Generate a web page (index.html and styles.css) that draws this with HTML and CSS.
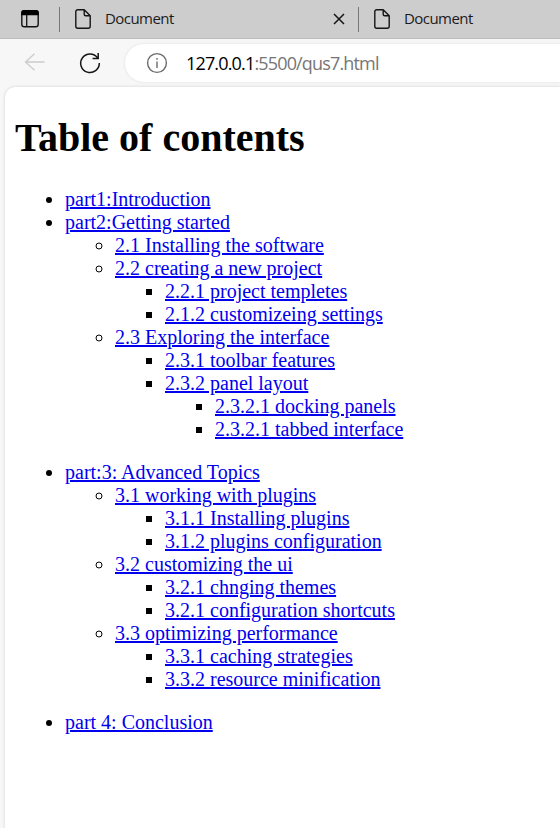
FILE: index.html
```html
<!DOCTYPE html>
<html lang="en">
<head>
<meta charset="utf-8">
<title>Document</title>
<link rel="stylesheet" href="styles.css">
</head>
<body>
<div class="tabs">
  <svg class="workspace" width="20" height="20" viewBox="0 0 20 20"><rect x="1.8" y="1.8" width="16.4" height="16" rx="2.6" fill="none" stroke="#111" stroke-width="1.4"/><path d="M1.2 6.2V4a3 3 0 0 1 3-3h11.6a3 3 0 0 1 3 3v2.2z" fill="#000"/><path d="M6.7 6v12" stroke="#111" stroke-width="1.3"/></svg>
  <i class="divider"></i>
  <svg class="doc" width="18" height="22" viewBox="0 0 18 22" fill="none" stroke="#151515" stroke-width="1.4" stroke-linejoin="round"><path d="M3.8 1.7h6.4l6 6v10.6a2 2 0 0 1-2 2H3.8a2 2 0 0 1-2-2V3.7a2 2 0 0 1 2-2zM10.2 1.7v4.5a1.5 1.5 0 0 0 1.5 1.5h4.5"/></svg>
  <span class="tab-title">Document</span>
  <svg class="close" width="12" height="12" viewBox="0 0 12 12"><path d="M1 1l10 10M11 1L1 11" stroke="#151515" stroke-width="1.5"/></svg>
  <i class="divider"></i>
  <svg class="doc" width="18" height="22" viewBox="0 0 18 22" fill="none" stroke="#151515" stroke-width="1.4" stroke-linejoin="round"><path d="M3.8 1.7h6.4l6 6v10.6a2 2 0 0 1-2 2H3.8a2 2 0 0 1-2-2V3.7a2 2 0 0 1 2-2zM10.2 1.7v4.5a1.5 1.5 0 0 0 1.5 1.5h4.5"/></svg>
  <span class="tab-title">Document</span>
</div>
<div class="toolbar">
  <svg class="back" width="22" height="20" viewBox="0 0 22 20" fill="none" stroke="#ccc" stroke-width="1.3"><path d="M20.5 9H1.5M10.5 .7L1.5 9l9 8.3"/></svg>
  <svg class="reload" width="22" height="22" viewBox="0 0 22 22" fill="none" stroke="#151515" stroke-width="1.5"><path d="M18.6 5.9A9.3 9.3 0 1 0 20.3 11M19.2 1v5.6h-5.6"/></svg>
  <div class="address">
    <svg width="22" height="22" viewBox="0 0 22 22" fill="none" stroke="#6b6b6b" stroke-width="1.4"><circle cx="11" cy="11" r="9.4"/><path d="M11 9.5V16M11 6v1.8"/></svg>
    <span class="url"><b>127.0.0.1</b>:5500/qus7.html</span>
  </div>
</div>
<main class="page">
  <h1>Table of contents</h1>
  <ul>
    <li><a href="#">part1:Introduction</a></li>
    <li><a href="#">part2:Getting started</a>
      <ul>
        <li><a href="#">2.1 Installing the software</a></li>
        <li><a href="#">2.2 creating a new project</a>
          <ul>
            <li><a href="#">2.2.1 project templetes</a></li>
            <li><a href="#">2.1.2 customizeing settings</a></li>
          </ul>
        </li>
        <li><a href="#">2.3 Exploring the interface</a>
          <ul>
            <li><a href="#">2.3.1 toolbar features</a></li>
            <li><a href="#">2.3.2 panel layout</a>
              <ul>
                <li><a href="#">2.3.2.1 docking panels</a></li>
                <li><a href="#">2.3.2.1 tabbed interface</a></li>
              </ul>
            </li>
          </ul>
        </li>
      </ul>
    </li>
  </ul>
  <ul>
    <li><a href="#">part:3: Advanced Topics</a>
      <ul>
        <li><a href="#">3.1 working with plugins</a>
          <ul>
            <li><a href="#">3.1.1 Installing plugins</a></li>
            <li><a href="#">3.1.2 plugins configuration</a></li>
          </ul>
        </li>
        <li><a href="#">3.2 customizing the ui</a>
          <ul>
            <li><a href="#">3.2.1 chnging themes</a></li>
            <li><a href="#">3.2.1 configuration shortcuts</a></li>
          </ul>
        </li>
        <li><a href="#">3.3 optimizing performance</a>
          <ul>
            <li><a href="#">3.3.1 caching strategies</a></li>
            <li><a href="#">3.3.2 resource minification</a></li>
          </ul>
        </li>
      </ul>
    </li>
  </ul>
  <ul>
    <li><a href="#">part 4: Conclusion</a></li>
  </ul>
</main>
</body>
</html>
```
FILE: styles.css
```css
* { box-sizing: border-box; }
body {
  margin: 0;
  height: 828px;
  display: flex;
  flex-direction: column;
  background: #f7f7f7;
  overflow: hidden;
}
svg, .divider, .tab-title { flex: none; }
.tabs {
  height: 39px;
  flex: none;
  display: flex;
  align-items: center;
  padding-left: 20px;
  background: #cdcdcd;
  border-bottom: 1px solid #bdbdbd;
}
.divider { width: 1px; height: 25px; background: #777; margin-left: 19px; }
.doc { margin-left: 14px; }
.tab-title {
  width: 70px;
  margin-left: 13px;
  padding-bottom: 2px;
  font: 15px/22px "Open Sans", "Noto Sans", sans-serif;
  letter-spacing: -0.55px;
  color: #1b1b1b;
  white-space: nowrap;
}
.close { margin-left: 158px; }
.close + .divider { margin-left: 13px; }
.toolbar {
  height: 48px;
  flex: none;
  display: flex;
  align-items: center;
  padding-left: 24px;
}
.reload { margin-left: 33px; }
.address {
  flex: 1;
  height: 38px;
  margin-left: 24px;
  padding-left: 21px;
  display: flex;
  align-items: center;
  gap: 18px;
  background: #fff;
  border-radius: 19px 0 0 19px;
  box-shadow: 0 0 3px #ddd;
}
.url {
  font: 18px/24px "Open Sans", "Noto Sans", sans-serif;
  letter-spacing: -0.84px;
  color: #767676;
  white-space: nowrap;
  padding-bottom: 1px;
}
.url b { font-weight: 400; color: #000; }
.page {
  flex: 1;
  margin-left: 5px;
  padding: 28px 10px 0;
  background: #fff;
  border-radius: 10px 0 0 0;
  box-shadow: 0 0 3px #ccc;
  font: 20px/23px "Liberation Serif", serif;
  color: #000;
}
h1 { margin: 0 0 27px; font-size: 40px; line-height: 46px; }
ul { margin: 0 0 20px; padding-left: 50px; }
ul ul { margin: 0; }
a { color: #00e; text-decoration-thickness: 2px; text-underline-offset: 1px; }
```
